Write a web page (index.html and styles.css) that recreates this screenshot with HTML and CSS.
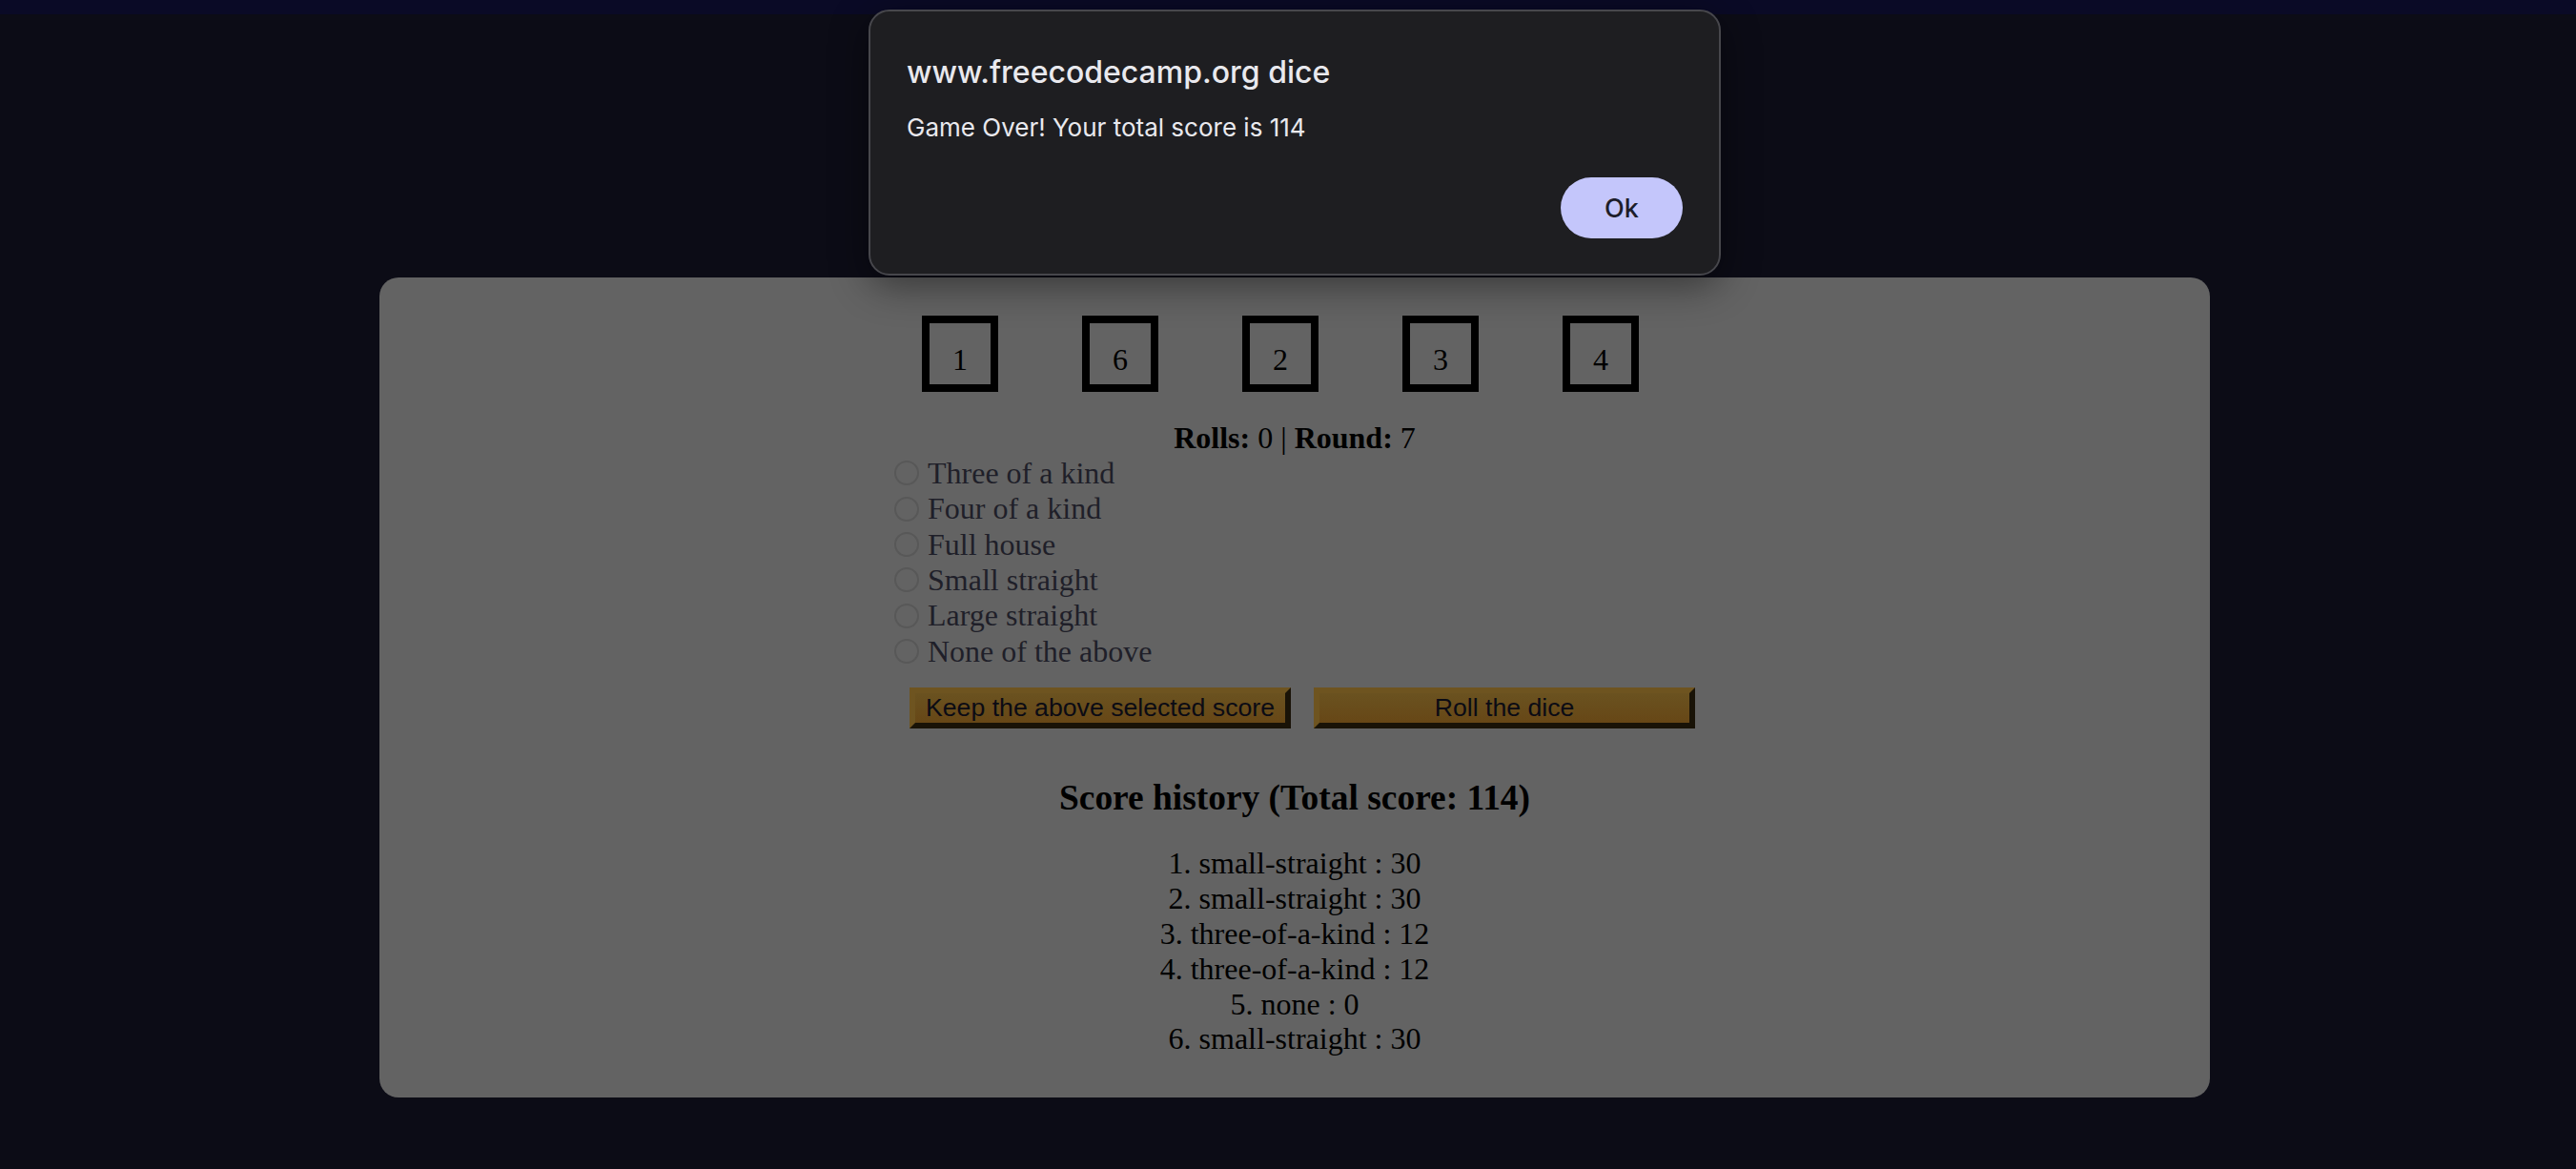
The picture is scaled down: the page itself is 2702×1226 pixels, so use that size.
FILE: index.html
```html
<!DOCTYPE html>
<html lang="en">
<head>
<meta charset="utf-8">
<title>Dice Game</title>
<link rel="stylesheet" href="styles.css">
</head>
<body>
<main class="card">
  <div class="game">
    <div class="dice">
      <div class="die">1</div>
      <div class="die">6</div>
      <div class="die">2</div>
      <div class="die">3</div>
      <div class="die">4</div>
    </div>
    <p class="stats"><strong>Rolls:</strong> 0 | <strong>Round:</strong> 7</p>
    <form class="options">
      <label class="option"><input type="radio" name="score" disabled><span>Three of a kind</span></label>
      <label class="option"><input type="radio" name="score" disabled><span>Four of a kind</span></label>
      <label class="option"><input type="radio" name="score" disabled><span>Full house</span></label>
      <label class="option"><input type="radio" name="score" disabled><span>Small straight</span></label>
      <label class="option"><input type="radio" name="score" disabled><span>Large straight</span></label>
      <label class="option"><input type="radio" name="score" disabled><span>None of the above</span></label>
    </form>
    <div class="actions">
      <button class="btn" type="button">Keep the above selected score</button>
      <button class="btn" type="button">Roll the dice</button>
    </div>
  </div>
  <h3 class="history-title">Score history (Total score: 114)</h3>
  <ol class="history">
    <li>small-straight : 30</li>
    <li>small-straight : 30</li>
    <li>three-of-a-kind : 12</li>
    <li>three-of-a-kind : 12</li>
    <li>none : 0</li>
    <li>small-straight : 30</li>
  </ol>
</main>

<div class="dialog" role="alertdialog">
  <div class="dialog-title">www.freecodecamp.org dice</div>
  <div class="dialog-message">Game Over! Your total score is 114</div>
  <div class="dialog-actions">
    <button class="dialog-ok" type="button">Ok</button>
  </div>
</div>
</body>
</html>
```

FILE: styles.css
```css
* {
  box-sizing: border-box;
  margin: 0;
  padding: 0;
}

html, body {
  height: 100%;
}

body {
  background: #0c0c16;
  border-top: 15px solid #0a0a26;
  font-family: "Liberation Serif", "Times New Roman", serif;
  font-size: 32px;
  line-height: 36.8px;
  color: #000;
  overflow: hidden;
}

.card {
  width: 1920px;
  margin: 276px 0 0 398px;
  padding: 40px 0 43px;
  background: #636363;
  border-radius: 20px;
}

.game {
  width: 840px;
  margin: 0 auto;
}

.dice {
  display: flex;
  justify-content: space-around;
  margin-bottom: 30px;
}

.die {
  width: 80px;
  height: 80px;
  margin-right: 30px;
  padding: 20px 0;
  border: 8px solid #000;
  text-align: center;
  line-height: 36.8px;
}

.stats {
  text-align: center;
  line-height: 36.8px;
}

.options {
  display: flex;
  flex-direction: column;
}

.option {
  display: flex;
  align-items: center;
  height: 37.3px;
  color: #1f1f29;
}

.option input {
  appearance: none;
  -webkit-appearance: none;
  width: 26px;
  height: 26px;
  margin: 0 9px 0 0;
  border: 2px solid #585858;
  border-radius: 50%;
  background: transparent;
  flex: none;
}

.actions {
  margin-top: 19px;
  font-size: 0;
}

.btn {
  width: 400px;
  height: 43px;
  margin-left: 16px;
  font-family: "Liberation Sans", Arial, sans-serif;
  font-size: 26.67px;
  color: #0b0b14;
  background: linear-gradient(#6a5220, #674716);
  border: 6px outset #6e5420;
  cursor: pointer;
}

.btn + .btn {
  margin-left: 24px;
}

.history-title {
  margin-top: 46px;
  text-align: center;
  font-size: 37.44px;
  line-height: 43px;
  font-weight: bold;
}

.history {
  margin-top: 29px;
  list-style: decimal inside;
  text-align: center;
  line-height: 36.8px;
}

.dialog {
  position: absolute;
  left: 911px;
  top: 10px;
  width: 894px;
  height: 279px;
  padding: 46px 38px 37px 38px;
  background: #1e1e21;
  border: 2px solid #47474c;
  border-radius: 22px;
  box-shadow: 0 10px 40px rgba(0, 0, 0, 0.45);
  font-family: Inter, "Noto Sans", sans-serif;
  color: #e9e9ee;
  display: flex;
  flex-direction: column;
}

.dialog-title {
  font-size: 32px;
  line-height: 36px;
  font-weight: 500;
}

.dialog-message {
  margin-top: 24px;
  font-size: 26px;
  line-height: 32px;
}

.dialog-actions {
  margin-top: auto;
  display: flex;
  justify-content: flex-end;
}

.dialog-ok {
  width: 128px;
  height: 64px;
  border: none;
  border-radius: 32px;
  background: #c4c6fb;
  color: #1d1d2a;
  font-family: Inter, "Noto Sans", sans-serif;
  font-size: 27px;
  font-weight: 500;
}
```
